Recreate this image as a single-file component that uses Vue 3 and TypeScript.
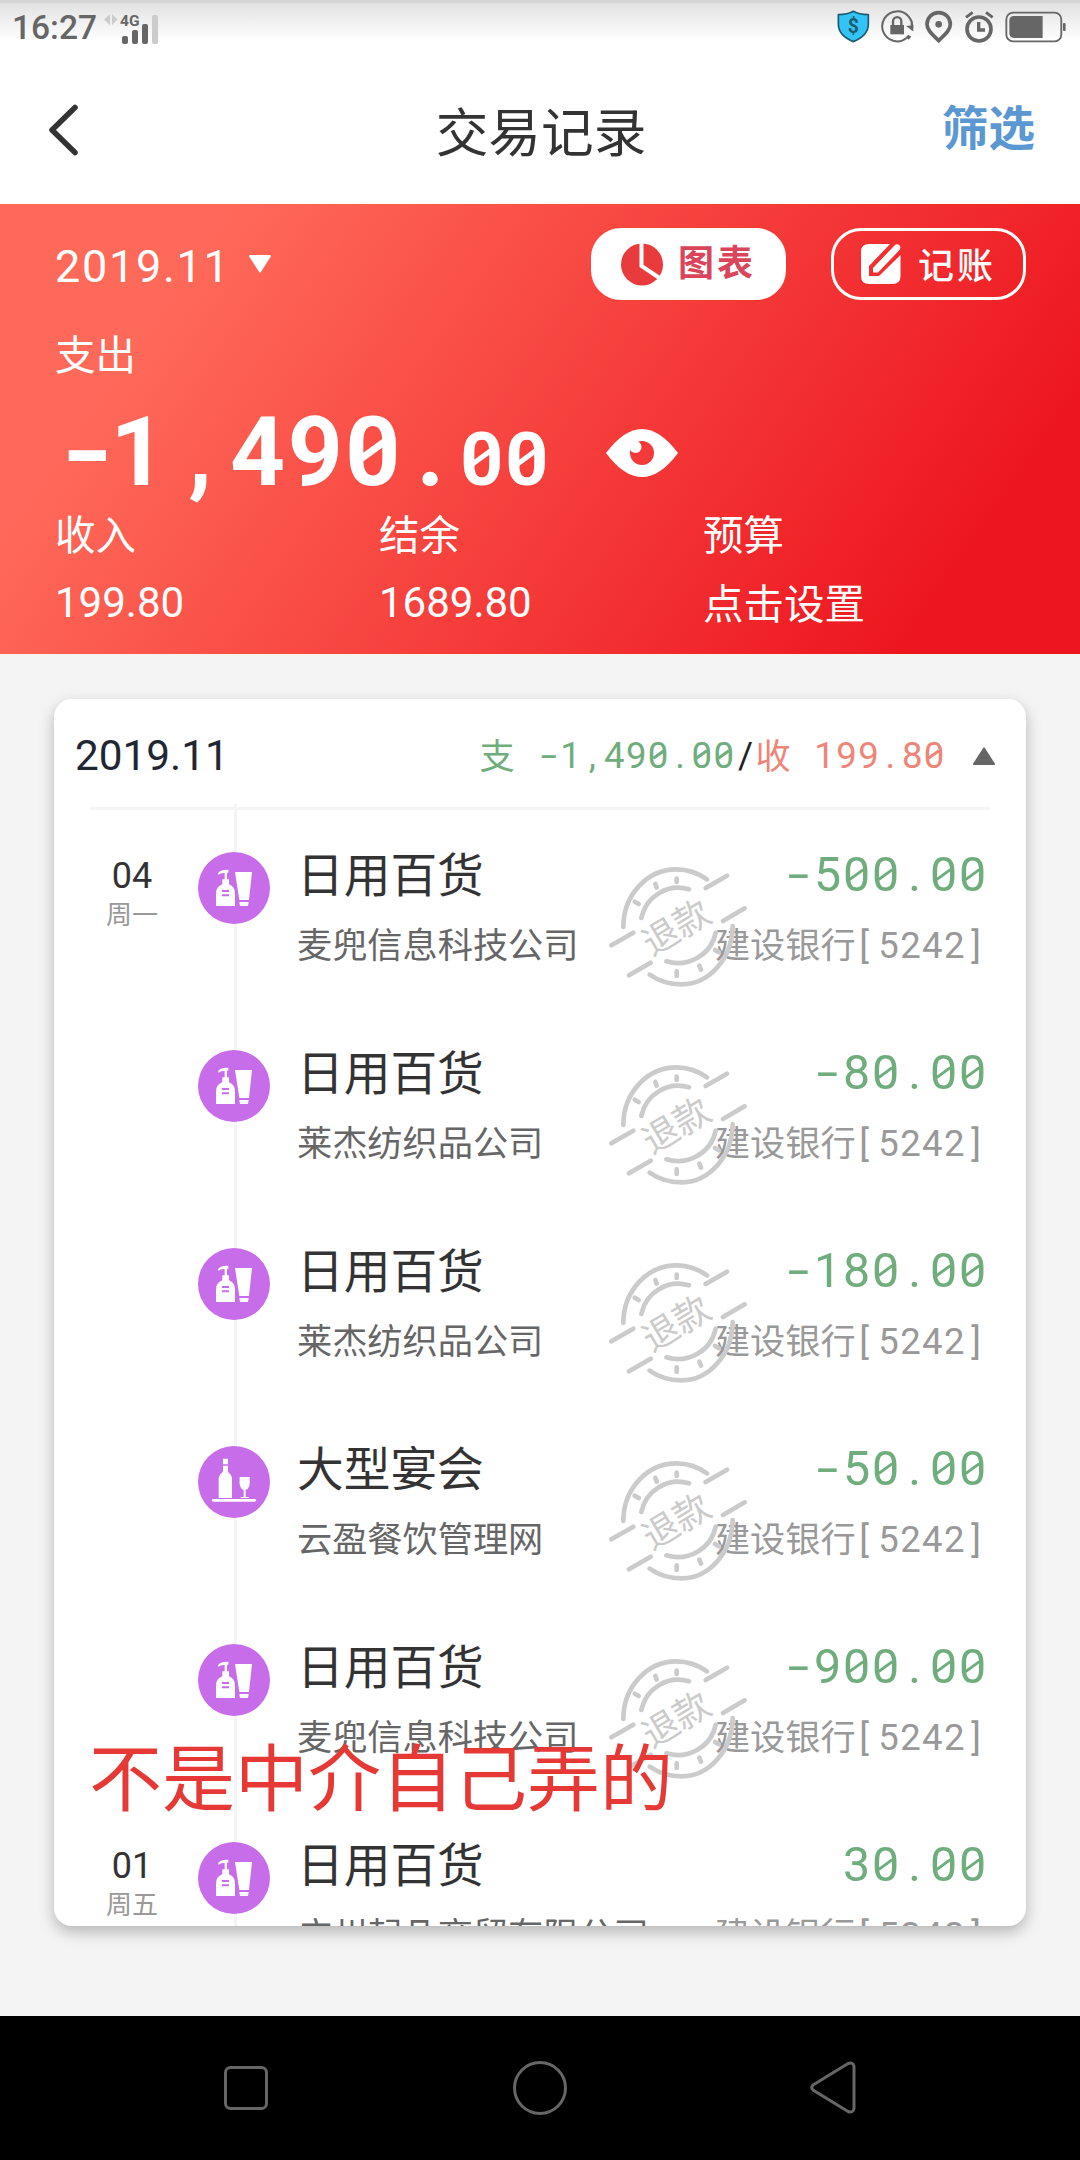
<script setup lang="ts">
import { h } from 'vue';

interface Registro {
  id: number;
  dia?: string;
  semana?: string;
  icone: 'frasco' | 'garrafa';
  titulo: string;
  loja: string;
  valor: string;
  reembolso: boolean;
}

const banco = '建设银行';
const cartao = '[5242]';

const registros: Registro[] = [
  { id: 1, dia: '04', semana: '周一', icone: 'frasco', titulo: '日用百货', loja: '麦兜信息科技公司', valor: '-500.00', reembolso: true },
  { id: 2, icone: 'frasco', titulo: '日用百货', loja: '莱杰纺织品公司', valor: '-80.00', reembolso: true },
  { id: 3, icone: 'frasco', titulo: '日用百货', loja: '莱杰纺织品公司', valor: '-180.00', reembolso: true },
  { id: 4, icone: 'garrafa', titulo: '大型宴会', loja: '云盈餐饮管理网', valor: '-50.00', reembolso: true },
  { id: 5, icone: 'frasco', titulo: '日用百货', loja: '麦兜信息科技公司', valor: '-900.00', reembolso: true },
  { id: 6, dia: '01', semana: '周五', icone: 'frasco', titulo: '日用百货', loja: '广州起凡商贸有限公司', valor: '30.00', reembolso: false },
];

const resumo = [
  { rotulo: '收入', valor: '199.80' },
  { rotulo: '结余', valor: '1689.80' },
  { rotulo: '预算', valor: '点击设置' },
];

const classes: Record<string, string> = {
  '0': 'mono-zero',
  '1': 'mono-um',
  '-': 'mono-menos',
  '[': 'mono-abre',
};

// fixed-width digits with a slashed zero
const Mono = (props: { text: string }) =>
  h(
    'span',
    { class: 'mono' },
    [...props.text].map((c) => h('span', { class: ['mono-c', classes[c]] }, [h('i', c)])),
  );
</script>

<template>
  <div class="tela">
    <header class="topo">
      <div class="status">
        <div class="status-esq">
          <span class="hora">16:27</span>
          <svg class="sinal" viewBox="0 0 56 32" width="56" height="32">
            <path d="M6 1v11L0 6.500zM8 1v11l5.500-5.500z" fill="#ccc" />
            <text x="16" y="13" font-size="15.500" font-weight="700" fill="#666">4G</text>
            <rect x="18" y="23" width="6" height="8" rx="2" fill="#666" />
            <rect x="28" y="17" width="6" height="14" rx="2" fill="#666" />
            <rect x="38" y="11" width="6" height="20" rx="2" fill="#666" />
            <rect x="48" y="2" width="6" height="29" rx="2" fill="#ccc" />
          </svg>
        </div>
        <div class="status-dir">
          <svg viewBox="36 18 98 100" width="32.700" height="33.300">
            <path d="M85 22c14 8 29 10 45 10v28c0 26-18 42-45 53-27-11-45-27-45-53V32c16 0 31-2 45-10z" fill="#33c4f5" stroke="#1d5c70" stroke-width="5" stroke-linejoin="round" />
            <text x="85" y="88" font-size="58" font-weight="700" text-anchor="middle" fill="#1d5c70">$</text>
          </svg>
          <svg viewBox="170 18 98 100" width="32.700" height="33.300">
            <path d="M262 79A45 45 0 1 0 247 102M262 50v14" fill="none" stroke="#666" stroke-width="6" />
            <path d="M245 66l22 16V64zM252 92l9 6-8 9-9-7z" fill="#666" />
            <rect x="198" y="63" width="41" height="28" fill="#666" />
            <path d="M206 65V52a12.500 12.500 0 0 1 25 0v13" fill="none" stroke="#666" stroke-width="7" />
          </svg>
          <svg viewBox="302 18 84 100" width="28" height="33.300">
            <path d="M343 26c-20 0-35 15-35 35 0 20 19 33 35 49 16-16 35-29 35-49 0-20-15-35-35-35z" fill="none" stroke="#666" stroke-width="11" />
            <circle cx="343" cy="61" r="10" fill="#666" />
          </svg>
          <svg viewBox="416 18 90 100" width="30" height="33.300">
            <circle cx="461" cy="75" r="36" fill="none" stroke="#666" stroke-width="11" />
            <path d="M460 54v24h19" fill="none" stroke="#666" stroke-width="10" />
            <path d="M422 40l20-15M502 40l-20-15" stroke="#666" stroke-width="9" />
          </svg>
          <svg viewBox="541 18 184 100" width="61.300" height="33.300">
            <rect x="545" y="26" width="165" height="86" rx="20" fill="none" stroke="#666" stroke-width="5.500" />
            <path d="M654 36v66h-86q-14 0-14-14V50q0-14 14-14z" fill="#666" />
            <rect x="715" y="57" width="8" height="24" rx="3" fill="#666" />
          </svg>
        </div>
      </div>
      <div class="barra">
        <svg class="voltar" viewBox="0 0 32 54" width="32" height="54">
          <path d="M27 4.500L4 27l23 22.500" fill="none" stroke="#333" stroke-width="5.500" stroke-linecap="round" stroke-linejoin="round" />
        </svg>
        <h1>交易记录</h1>
        <span class="filtro">筛选</span>
      </div>
    </header>

    <section class="painel">
      <div class="painel-topo">
        <div class="mes">
          <span>2019.11</span>
          <svg viewBox="0 0 24 18" width="24" height="18"><path d="M2 1h20L12 16.500z" fill="#fff" stroke="#fff" stroke-width="2" stroke-linejoin="round" /></svg>
        </div>
        <div class="botoes">
          <button class="botao botao-cheio">
            <svg viewBox="0 0 42 43" width="42" height="43">
              <circle cx="21" cy="21.500" r="21" fill="#ea3b3c" />
              <path d="M20.500 -1v24l18 12" fill="none" stroke="#fff" stroke-width="4" />
            </svg>
            <span>图表</span>
          </button>
          <button class="botao botao-linha">
            <svg viewBox="0 0 40 40" width="40" height="40">
              <path d="M8 0H29L8 22V32H18L39.500 11V32q0 8-8 8H8q-8 0-8-8V8q0-8 8-8z" fill="#fff" />
              <path d="M33.500 1.500q3-2.500 5 0 2 2-.5 5L17 28.500h-5V24z" fill="#fff" />
            </svg>
            <span>记账</span>
          </button>
        </div>
      </div>
      <div class="rotulo">支出</div>
      <div class="total">
        <Mono class="total-int" text="-1,490." /><Mono class="total-dec" text="00" />
        <svg class="olho" viewBox="0 0 72 48" width="72" height="48">
          <path d="M0 24C12 8 24 0 36 0s24 8 36 24C60 40 48 48 36 48S12 40 0 24z" fill="#fff" />
          <circle cx="36" cy="24" r="12" fill="#f43a39" />
          <circle cx="29.500" cy="18" r="6" fill="#fff" />
        </svg>
      </div>
      <div class="resumo">
        <div v-for="item in resumo" :key="item.rotulo">
          <div class="rotulo">{{ item.rotulo }}</div>
          <div class="resumo-valor" :class="{ 'resumo-numero': item.rotulo !== '预算' }">{{ item.valor }}</div>
        </div>
      </div>
    </section>

    <main class="corpo">
      <div class="cartao">
        <div class="cartao-topo">
          <span class="cartao-mes">2019.11</span>
          <div class="cartao-soma">
            <span class="verde">支</span><Mono class="verde" text=" -1,490.00" /><Mono class="barra-div" text="/" /><span class="rosa">收</span><Mono class="rosa" text=" 199.80" />
            <svg viewBox="0 0 24 18" width="24" height="18"><path d="M2 17h20L12 1.500z" fill="#666" stroke="#666" stroke-width="2" stroke-linejoin="round" /></svg>
          </div>
        </div>
        <div class="divisor"></div>
        <div class="lista">
          <div v-for="r in registros" :key="r.id" class="linha">
            <div class="data">
              <div class="dia">{{ r.dia }}</div>
              <div class="semana">{{ r.semana }}</div>
            </div>
            <div class="icone">
              <svg v-if="r.icone === 'frasco'" viewBox="0 0 216 216" width="72" height="72">
                <path d="M54 162v-38q0-20 19-27V82h7V63q-13-1-18 5-3-2-1-6 8-10 30-9v9h-4v20h6v15q18 7 18 27v38z" fill="#fff" />
                <path d="M111 60h51l-9 84h-29zM124 150h28l-2 12h-24z" fill="#fff" />
                <path d="M72 117h21M72 130h21" stroke="#c86de9" stroke-width="6" />
              </svg>
              <svg v-else viewBox="0 0 216 216" width="72" height="72">
                <path d="M75 38h15v17H75zM75 59h15v16q0 4 4 7 8 6 8 14v60H62V96q0-8 8-14 5-4 5-7z" fill="#fff" />
                <path d="M125 93h30q3 38-12 38v22h9v3h-24v-3h9v-22q-15 0-12-38z" fill="#fff" />
                <path d="M46 163h124" stroke="#fff" stroke-width="8" stroke-linecap="round" />
              </svg>
            </div>
            <div class="info">
              <div class="titulo">{{ r.titulo }}</div>
              <div class="loja">{{ r.loja }}</div>
            </div>
            <div class="valores">
              <Mono class="valor" :text="r.valor" />
              <div class="banco">{{ banco }}<Mono :text="cartao" /></div>
            </div>
            <svg v-if="r.reembolso" class="carimbo" viewBox="0 0 450 390" width="150" height="130">
              <g fill="none" stroke="#cbcbcb" stroke-width="14" stroke-linecap="round">
                <path d="M58 195C58 98 130 22 217 22C252 22 282 33 309 52M386 192C386 285 318 367 233 367C195 367 165 358 137 338" />
                <path d="M112 168A113 113 0 0 1 255 82M187 298A116 113 0 0 0 335 212" />
                <path d="M305 78l64-37M357 177l65-38M22 250l66-38M75 340l65-38" />
                <path d="M218 50v10M154 66l4 11M92 119l12 7M218 328v14M286 311l5 12M333 264l12 7" />
              </g>
              <text x="0" y="38" font-size="108" text-anchor="middle" fill="#cbcbcb" transform="translate(217 197) rotate(-31)">退款</text>
            </svg>
          </div>
        </div>
      </div>
      <div class="legenda">不是中介自己弄的</div>
    </main>

    <nav class="nav">
      <svg viewBox="0 0 54 54" width="54" height="54"><rect x="6.500" y="6.500" width="41" height="41" rx="5" /></svg>
      <svg viewBox="0 0 54 54" width="54" height="54"><circle cx="27" cy="27" r="25.500" /></svg>
      <svg viewBox="0 0 54 54" width="54" height="54"><path d="M6 24L41 2.500q5-2 6 3v42q-1 5-6 3L6 29q-2.500-2.500 0-5z" /></svg>
    </nav>
  </div>
</template>

<style>
body {
  margin: 0;
}

.mono {
  display: inline-flex;
}

.mono-c {
  position: relative;
  width: 0.6em;
  text-align: center;
  white-space: pre;
}

.mono-c i {
  display: block;
  font-style: normal;
}

.mono-menos i {
  transform: scaleX(1.6);
}

.total-int .mono-menos i {
  transform: translateX(0.03em) scaleX(1.4);
}

.total-int .mono-um i {
  transform: translateX(-0.045em);
}

.mono-abre i {
  transform: translateX(-0.07em);
}

.mono-zero::after {
  content: '';
  position: absolute;
  left: 0.12em;
  top: 50%;
  width: 0.36em;
  height: 0.07em;
  margin-top: -0.05em;
  background: currentColor;
  transform: rotate(-36deg);
}
</style>

<style scoped>
.tela {
  display: flex;
  flex-direction: column;
  width: 1080px;
  height: 2160px;
  overflow: hidden;
  background: #f4f4f4;
  color: #333;
  font-family: Roboto, 'Noto Sans CJK SC', sans-serif;
}

.topo {
  height: 204px;
  background: #fff;
}

.status {
  display: flex;
  justify-content: space-between;
  height: 56px;
  box-sizing: border-box;
  padding: 10px 14px 0 12px;
  border-top: 3px solid #d5d5d5;
  background: linear-gradient(#e2e2e2, #fff 38px);
}

.status-esq,
.status-dir {
  display: flex;
}

.hora {
  width: 92px;
  color: #666;
  font-size: 33.5px;
  font-weight: 500;
  line-height: 30px;
}

.status-dir {
  gap: 11px;
  margin-top: -3px;
}

.barra {
  display: flex;
  align-items: center;
  justify-content: space-between;
  height: 148px;
  padding: 0 45px 0 48px;
}

.voltar {
  margin: -1px 60px 0 0;
}

h1 {
  margin: 7px 0 0;
  font-size: 52.7px;
  font-weight: 400;
  line-height: 60px;
}

.filtro {
  margin-top: -3px;
  color: #5b98d2;
  font-size: 46.5px;
  font-weight: 700;
  line-height: 60px;
}

.painel {
  height: 450px;
  box-sizing: border-box;
  padding: 24px 54px 0 55px;
  background: linear-gradient(125deg, #ff6959 17%, #ed161f 87%);
  color: #fff;
}

.painel-topo {
  display: flex;
  justify-content: space-between;
  height: 72px;
}

.mes {
  display: flex;
  align-items: center;
  gap: 17px;
  font-size: 45px;
  letter-spacing: 1.7px;
  line-height: 72px;
}

.mes span {
  margin-top: 5px;
}

.botoes {
  display: flex;
  gap: 45px;
}

.botao {
  display: flex;
  align-items: center;
  box-sizing: border-box;
  width: 195px;
  height: 72px;
  padding: 0 0 0 27px;
  border: 3px solid #fff;
  border-radius: 30px;
  font-family: inherit;
  font-size: 36px;
  font-weight: 700;
  letter-spacing: 3px;
  line-height: 66px;
}

.botao-cheio {
  gap: 15px;
  background: #fff;
  color: #d9455a;
}

.botao-linha {
  gap: 17px;
  background: none;
  color: #fff;
  font-weight: 500;
}

.botao-linha span {
  margin-top: 6px;
}

.rotulo {
  height: 50px;
  font-size: 40.5px;
  line-height: 50px;
}

.painel > .rotulo {
  margin-top: 31px;
}

.total {
  display: flex;
  align-items: baseline;
  height: 134px;
  margin-top: -4px;
  padding-left: 1px;
  font-weight: 700;
}

.total-int {
  font-size: 96px;
  line-height: 150px;
}

.total-dec {
  font-size: 75px;
  line-height: 100px;
}

.olho {
  align-self: flex-start;
  margin: 52px 0 0 57px;
}

.resumo {
  display: grid;
  grid-template-columns: repeat(3, 324px);
}

.resumo-valor {
  margin-top: 19px;
  font-size: 40.5px;
  line-height: 50px;
}

.resumo-numero {
  margin-top: 17px;
  font-size: 42px;
}

.corpo {
  position: relative;
  flex: 1;
  padding: 45px 54px 0;
}

.cartao {
  height: 1227px;
  overflow: hidden;
  border-radius: 18px;
  background: #fff;
  box-shadow: 0 6px 15px rgba(0, 0, 0, 0.26);
}

.cartao-topo {
  display: flex;
  align-items: center;
  justify-content: space-between;
  height: 108px;
  padding: 0 30px 0 21px;
}

.cartao-mes {
  margin-top: 4px;
  color: #1f2733;
  font-size: 42.3px;
}

.cartao-soma {
  display: flex;
  align-items: center;
  margin-top: 4px;
  font-size: 36.5px;
}

.cartao-soma > span:not(.mono) {
  margin: -4px 1px 0 -1px;
  font-size: 35.2px;
}

.cartao-soma svg {
  margin: 2px 0 0 27px;
}

.verde {
  color: #6fad7c;
}

.rosa {
  color: #ee8577;
}

.barra-div {
  color: #222;
}

.divisor {
  height: 3px;
  margin: 0 36px;
  background: #f4f4f4;
}

.lista {
  position: relative;
}

.lista::before {
  content: '';
  position: absolute;
  top: -6px;
  bottom: 0;
  left: 180px;
  width: 3px;
  background: #f4f4f4;
}

.linha {
  position: relative;
  display: grid;
  grid-template-columns: 120px 72px 1fr auto;
  height: 198px;
  box-sizing: border-box;
  padding: 42px 39px 0 24px;
}

.data {
  width: 108px;
  text-align: center;
}

.dia {
  min-height: 42px;
  margin-top: 3px;
  font-size: 36px;
  line-height: 42px;
}

.semana {
  color: #999;
  font-size: 26px;
  line-height: 37px;
}

.icone {
  position: relative;
  width: 72px;
  height: 72px;
  border-radius: 50%;
  background: #c86de9;
}

.info {
  padding-left: 27px;
  white-space: nowrap;
}

.titulo {
  margin-top: -1px;
  font-size: 46.7px;
  line-height: 50px;
}

.loja {
  margin-top: 19.5px;
  color: #666;
  font-size: 35.2px;
  line-height: 50px;
}

.valores {
  display: flex;
  flex-direction: column;
  align-items: flex-end;
}

.valor {
  color: #6fad7c;
  font-size: 48.3px;
  line-height: 46px;
}

.banco {
  display: flex;
  margin-top: 22.5px;
  color: #999;
  font-size: 35.2px;
  line-height: 50px;
}

.banco .mono {
  font-size: 36.5px;
}

/* refund stamp lies over the bank name */
.carimbo {
  position: absolute;
  top: 52px;
  left: 550px;
}

.legenda {
  position: absolute;
  top: 1081px;
  left: 89px;
  color: #e63936;
  font-size: 73px;
  line-height: 90px;
  white-space: nowrap;
}

.nav {
  display: grid;
  grid-template-columns: repeat(3, 294px);
  justify-content: center;
  align-items: center;
  justify-items: center;
  height: 144px;
  background: #000;
}

.nav svg {
  fill: none;
  stroke: #666;
  stroke-width: 3;
}
</style>
